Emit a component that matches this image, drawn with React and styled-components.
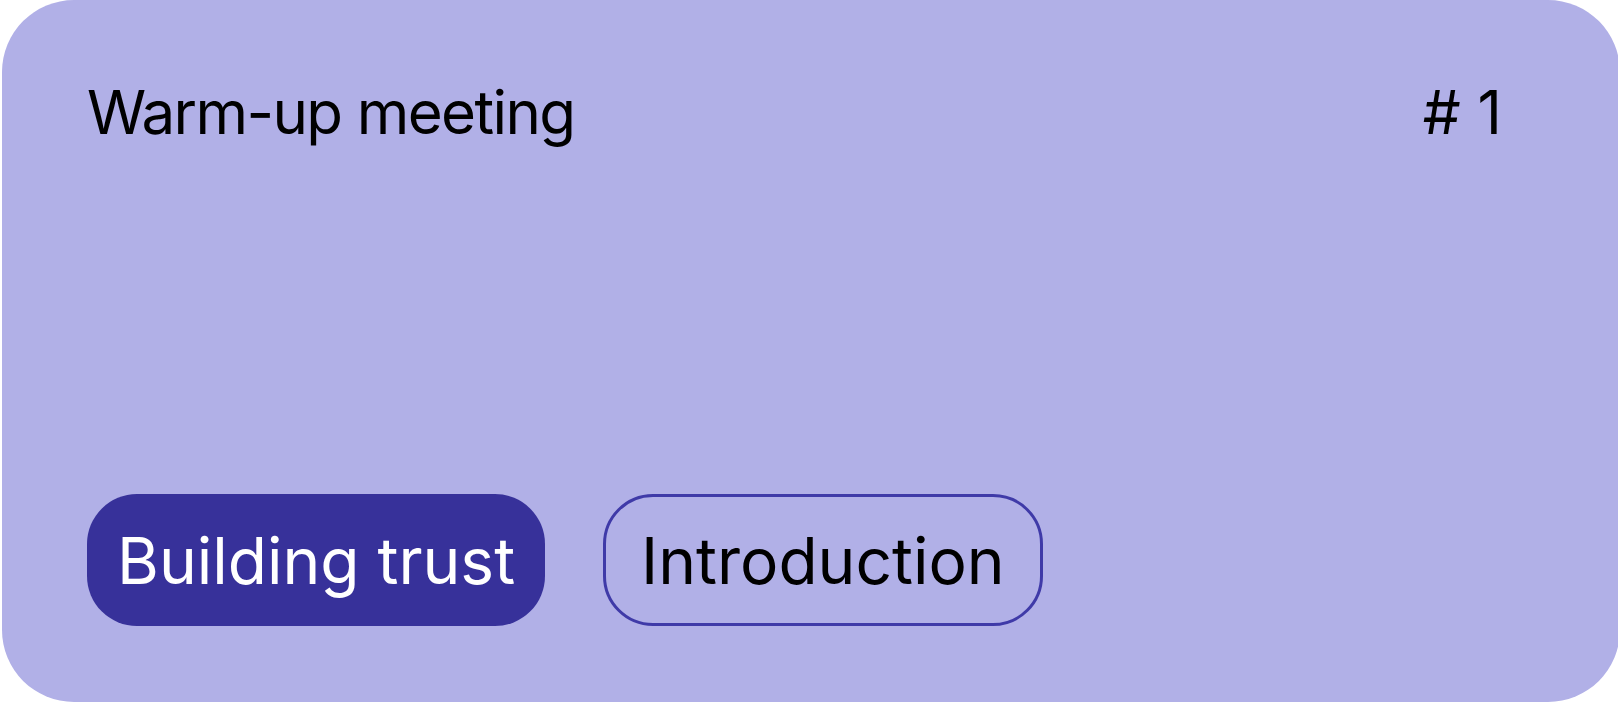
import React from 'react';
import styled, { createGlobalStyle } from 'styled-components';

const GlobalStyle = createGlobalStyle`
  html, body {
    margin: 0;
    padding: 0;
    background: #ffffff;
  }
  body {
    font-family: Inter, "Noto Sans", sans-serif;
  }
`;

const Card = styled.section`
  box-sizing: border-box;
  width: 1618px;
  height: 702px;
  margin-left: 2px;
  border-radius: 72px;
  background: #b1b0e7;
  padding: 76px 118px 76px 85px;
  display: flex;
  flex-direction: column;
  justify-content: space-between;
`;

const Header = styled.div`
  display: flex;
  justify-content: space-between;
  align-items: flex-start;
`;

const Title = styled.h2`
  margin: 0;
  font-size: 60px;
  font-weight: 400;
  color: #000;
  letter-spacing: -1.6px;
`;

const Number = styled.span`
  font-size: 60px;
  font-weight: 400;
  color: #000;
`;

const Tags = styled.div`
  display: flex;
  gap: 58px;
`;

const Tag = styled.span`
  box-sizing: border-box;
  height: 132px;
  display: inline-flex;
  align-items: center;
  padding: 0 ${(p) => (p.$active ? '30px' : '35px')};
  border-radius: 50px;
  font-size: 64px;
  border: ${(p) => (p.$active ? '0' : '3px solid #3f3aa8')};
  background: ${(p) => (p.$active ? '#37319a' : 'transparent')};
  color: ${(p) => (p.$active ? '#ffffff' : '#000000')};
`;

const tags = [
  { label: 'Building trust', active: true },
  { label: 'Introduction', active: false },
];

const App = () => {
  return (
    <>
      <GlobalStyle />
      <Card>
        <Header>
          <Title>Warm-up meeting</Title>
          <Number># 1</Number>
        </Header>
        <Tags>
          {tags.map(({ label, active }) => (
            <Tag key={label} $active={active}>
              {label}
            </Tag>
          ))}
        </Tags>
      </Card>
    </>
  );
};

export default App;
